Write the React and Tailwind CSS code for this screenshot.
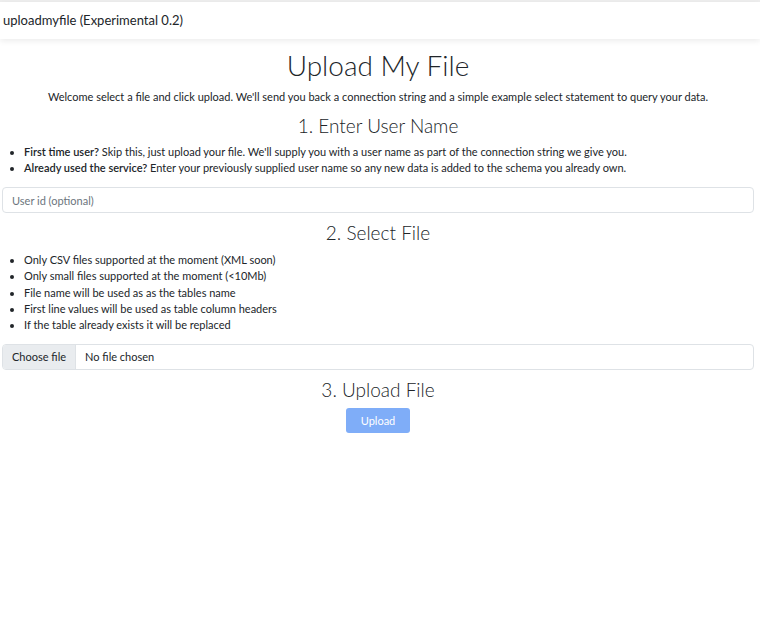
import React from 'react';

const font = { fontFamily: 'Lato, "Noto Sans", sans-serif' };

export default function App() {
  return (
    <div className="min-h-[621px] bg-white text-[#212529] border-t-2 border-[#eeeeee]" style={font}>
      {/* Navbar */}
      <nav className="h-[37px] flex items-center px-[3px] bg-white shadow-[0_2px_6px_rgba(0,0,0,0.08)]">
        <span className="text-[13px]">uploadmyfile (Experimental 0.2)</span>
      </nav>

      <main className="pl-[2px] pr-[6px] flex flex-col">
        <h1 className="text-center text-[28px] leading-[34px] mt-[9px] font-light">Upload My File</h1>
        <p className="text-center text-[11px] leading-[16px] mt-[7px]">
          Welcome select a file and click upload. We'll send you back a connection string and a simple example select statement to query your data.
        </p>

        <h2 className="text-center text-[19px] leading-[24px] mt-[9px] font-light">1. Enter User Name</h2>
        <ul className="list-disc pl-[22px] mt-[6px] text-[11px] leading-[16px]">
          <li><span className="font-semibold">First time user?</span> Skip this, just upload your file. We'll supply you with a user name as part of the connection string we give you.</li>
          <li><span className="font-semibold">Already used the service?</span> Enter your previously supplied user name so any new data is added to the schema you already own.</li>
        </ul>
        <input
          type="text"
          placeholder="User id (optional)"
          className="mt-[11px] h-[26px] w-full border border-[#dee2e6] rounded-[4px] px-[9px] text-[11px] placeholder:text-[#6c757d] outline-none"
        />

        <h2 className="text-center text-[19px] leading-[24px] mt-[8px] font-light">2. Select File</h2>
        <ul className="list-disc pl-[22px] mt-[7px] text-[11px] leading-[16.25px]">
          <li>Only CSV files supported at the moment (XML soon)</li>
          <li>Only small files supported at the moment (&lt;10Mb)</li>
          <li>File name will be used as as the tables name</li>
          <li>First line values will be used as table column headers</li>
          <li>If the table already exists it will be replaced</li>
        </ul>
        <div className="mt-[11px] h-[26px] w-full border border-[#dee2e6] rounded-[4px] flex items-stretch overflow-hidden text-[11px]">
          <span className="bg-[#e9ecef] border-r border-[#dee2e6] px-[9px] flex items-center">Choose file</span>
          <span className="px-[9px] flex items-center">No file chosen</span>
        </div>

        <h2 className="text-center text-[19px] leading-[24px] mt-[8px] font-light">3. Upload File</h2>
        <div className="flex justify-center mt-[6px]">
          <button className="w-[64px] h-[25px] rounded-[3px] bg-[#7fadf8] text-white text-[11px]">Upload</button>
        </div>
      </main>
    </div>
  );
}
